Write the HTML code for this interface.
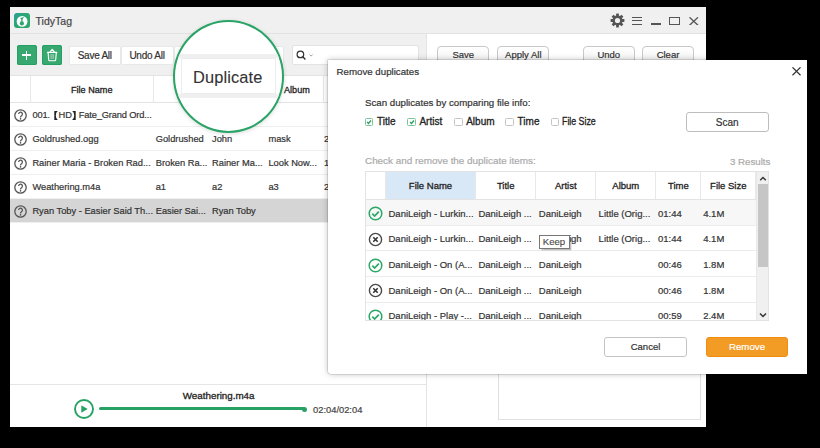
<!DOCTYPE html>
<html><head><meta charset="utf-8">
<style>
*{margin:0;padding:0;box-sizing:border-box}
html,body{width:820px;height:448px;overflow:hidden;background:#000;font-family:"Liberation Sans",sans-serif;color:#333;-webkit-text-stroke-width:0.2px}
.a{position:absolute}
.t{position:absolute;white-space:nowrap;line-height:1}
#win{left:10px;top:7px;width:696px;height:420px;background:#fff;overflow:hidden}
#title{left:0;top:0;width:696px;height:27px;background:#f0f0f0;border-bottom:1px solid #e2e2e2}
#tb{left:0;top:27px;width:416px;height:42px;background:#f0f0f0;border-bottom:1px solid #e3e3e3}
.gbtn{width:20px;height:20px;background:#37a86f;border-radius:2.5px;box-shadow:inset 0 0 0 1px #26a062}
.wbtn{background:#fff;border:1px solid #e8e8e8;border-radius:2px;height:19.5px;font-size:10px;letter-spacing:-0.25px;color:#333;text-align:center;line-height:17px}
.hd{font-size:9.1px;color:#222;-webkit-text-stroke-width:0.3px}
.row{left:0;width:416px;height:24px;border-bottom:1px solid #efefef}
.cell{position:absolute;top:7.5px;font-size:9.3px;color:#333;white-space:nowrap;line-height:1}
.br{font-weight:bold;padding:0 1.5px}
.q{position:absolute;left:4px;top:5.5px;width:13px;height:13px}
#rp{left:416px;top:27px;width:280px;height:393px;border-left:1px solid #e3e3e3;background:#fff}
.rbtn{height:20px;border:1px solid #c9c9c9;border-radius:4px;background:linear-gradient(#fff,#f1f1f1);font-size:9.5px;text-align:center;line-height:16px;color:#333}
#dlg{left:328px;top:60px;width:479px;height:314px;background:#fff;border-radius:0 0 0 3px;box-shadow:0 0 6px rgba(0,0,0,.25),0 0 0 .6px rgba(0,0,0,.18)}
.dt{font-size:9.7px;color:#333}
.cb{position:absolute;width:8.5px;height:8.5px;border:1px solid #c4c4c4;border-radius:1.5px;background:#fff}
.cb.on{border-color:#7cc49b}
.lbl{font-size:10px;color:#222;-webkit-text-stroke-width:0.3px}
.th{position:absolute;top:0;height:27px;border-right:1px solid #e8e8e8;font-size:9.5px;color:#222;text-align:center;line-height:27px;-webkit-text-stroke-width:0.3px}
.dr{position:absolute;left:0;width:391px;height:25.7px;border-bottom:1px solid #ececec}
.ic{position:absolute;left:2.1px;top:6.2px}
.dc{position:absolute;top:8.6px;font-size:9.5px;color:#333;white-space:nowrap;line-height:1}
</style></head><body>
<div id="win" class="a">
  <div id="title" class="a">
    <div class="a" style="left:4.2px;top:5.8px;width:15.6px;height:15.6px;border-radius:3px;background:linear-gradient(135deg,#2aa196,#2ba86a 60%)"></div>
    <div class="t" style="left:25.6px;top:9.3px;font-size:10.5px;color:#444">TidyTag</div>
    <svg class="a" style="left:4.2px;top:5.8px" width="15.6" height="15.6" viewBox="0 0 15.6 15.6"><circle cx="8.1" cy="8.4" r="5.4" fill="#fff"/><circle cx="7.9" cy="10.4" r="2.1" fill="#2aa66e"/><path d="M7.3 5.6h1.2v4.5H7.3z" fill="#2aa66e"/><path d="M6.1 4.9L10.1 4 8 6.9z" fill="#2aa66e"/></svg>
    <svg class="a" style="left:600px;top:6px" width="15" height="15" viewBox="0 0 15 15"><g fill="#555"><circle cx="7.5" cy="7.5" r="5"/><rect x="6.1" y="0.6" width="2.8" height="3" rx=".4" transform="rotate(0 7.5 7.5)"/><rect x="6.1" y="0.6" width="2.8" height="3" rx=".4" transform="rotate(45 7.5 7.5)"/><rect x="6.1" y="0.6" width="2.8" height="3" rx=".4" transform="rotate(90 7.5 7.5)"/><rect x="6.1" y="0.6" width="2.8" height="3" rx=".4" transform="rotate(135 7.5 7.5)"/><rect x="6.1" y="0.6" width="2.8" height="3" rx=".4" transform="rotate(180 7.5 7.5)"/><rect x="6.1" y="0.6" width="2.8" height="3" rx=".4" transform="rotate(225 7.5 7.5)"/><rect x="6.1" y="0.6" width="2.8" height="3" rx=".4" transform="rotate(270 7.5 7.5)"/><rect x="6.1" y="0.6" width="2.8" height="3" rx=".4" transform="rotate(315 7.5 7.5)"/></g><circle cx="7.5" cy="7.5" r="2.6" fill="#f0f0f0"/></svg>
    <div class="a" style="left:622px;top:9.8px;width:10px;height:1.3px;background:#555"></div>
    <div class="a" style="left:622px;top:13.2px;width:10px;height:1.3px;background:#555"></div>
    <div class="a" style="left:622px;top:16.8px;width:10px;height:1.3px;background:#555"></div>
    <div class="a" style="left:641.3px;top:16px;width:10px;height:2px;background:#555"></div>
    <div class="a" style="left:659px;top:10px;width:11px;height:8px;border:1.5px solid #555"></div>
    <svg class="a" style="left:679px;top:9.7px" width="9.5" height="8.5" viewBox="0 0 9.5 8.5"><path d="M.5.3l8.5 8M9 .3L.5 8.3" stroke="#555" stroke-width="1.3"/></svg>
  </div>
  <div id="tb" class="a">
    <div class="a gbtn" style="left:7px;top:11px"><div class="a" style="left:4.6px;top:9.2px;width:9.8px;height:1.8px;background:#fff"></div><div class="a" style="left:8.7px;top:5.8px;width:1.8px;height:9px;background:#fff"></div></div>
    <div class="a gbtn" style="left:32px;top:11px"><svg class="a" style="left:0;top:0" width="20" height="20" viewBox="0 0 20 20"><path d="M7.9 7.2L10.2 4.4l2.3 2.8M5.1 7.3h10.2M6.1 7.4L6.7 14.7Q6.8 15.7 7.7 15.7H12.7Q13.6 15.7 13.7 14.7L14.3 7.4" fill="none" stroke="#fff" stroke-width="1.15" stroke-linejoin="round"/><rect x="8.4" y="9.3" width="3.6" height="4.4" fill="#a9d6bb"/><path d="M10.2 9.3v4.4M8.4 10.8h3.6M8.4 12.3h3.6" stroke="#3aa872" stroke-width=".5"/></svg></div>
    <div class="a wbtn" style="left:58.5px;top:11.7px;width:52.5px">Save All</div>
    <div class="a wbtn" style="left:110.5px;top:11.7px;width:53px">Undo All</div>
    <div class="a wbtn" style="left:163.5px;top:11.7px;width:110px"></div>
    <div class="a" style="left:281.7px;top:11px;width:127px;height:19.5px;background:#fff;border:1px solid #e3e3e3;border-radius:2px"><svg class="a" style="left:3px;top:3.8px" width="20" height="11" viewBox="0 0 20 11"><circle cx="4.4" cy="4.4" r="3.3" fill="none" stroke="#333" stroke-width="1.2"/><path d="M6.8 6.8l2.6 2.6" stroke="#333" stroke-width="1.4"/><path d="M13.5 4.5l1.6 1.6 1.6-1.6" fill="none" stroke="#999" stroke-width=".9"/></svg></div>
  </div>
  <!-- header -->
  <div class="a" style="left:0;top:69px;width:416px;height:27px;border-bottom:1px solid #e3e3e3;background:#fff">
    <div class="a" style="left:20px;top:0;width:1px;height:27px;background:#e8e8e8"></div>
    <div class="a" style="left:143px;top:0;width:1px;height:27px;background:#e8e8e8"></div>
    <div class="a" style="left:312.5px;top:0;width:1px;height:27px;background:#e8e8e8"></div>
    <div class="t hd" style="left:61px;top:9.5px">File Name</div>
    <div class="t hd" style="left:274px;top:9.5px">Album</div>
  </div>
  <div class="a row" style="top:96px"><svg class="q" viewBox="0 0 13 13"><circle cx="6.5" cy="6.5" r="5.7" fill="none" stroke="#555" stroke-width="1.3"/><path d="M4.6 5.1a1.9 1.9 0 1 1 2.9 1.6c-.6.4-.9.7-.9 1.4v.3" fill="none" stroke="#555" stroke-width="1.3"/><circle cx="6.5" cy="9.9" r=".8" fill="#555"/></svg><div class="cell" style="left:22.4px;letter-spacing:-0.15px">001.<span style="display:inline-block;position:relative;width:4px;height:1px;margin:0 0.3px 0 4.4px"><svg style="position:absolute;left:0;top:-6px" width="4" height="9" viewBox="0 0 4 9"><path d="M.3 0H3.8Q1.8 1.2 1.8 4.5T3.8 9H.3z" fill="#222"/></svg></span>HD<span style="display:inline-block;position:relative;width:4px;height:1px;margin:0 2.4px 0 0.6px"><svg style="position:absolute;left:0;top:-6px" width="4" height="9" viewBox="0 0 4 9"><path d="M3.7 0H.2Q2.2 1.2 2.2 4.5T.2 9H3.7z" fill="#222"/></svg></span>Fate_Grand Ord...</div></div>
  <div class="a row" style="top:120px"><svg class="q" viewBox="0 0 13 13"><circle cx="6.5" cy="6.5" r="5.7" fill="none" stroke="#555" stroke-width="1.3"/><path d="M4.6 5.1a1.9 1.9 0 1 1 2.9 1.6c-.6.4-.9.7-.9 1.4v.3" fill="none" stroke="#555" stroke-width="1.3"/><circle cx="6.5" cy="9.9" r=".8" fill="#555"/></svg><div class="cell" style="left:22.4px">Goldrushed.ogg</div><div class="cell" style="left:145.7px">Goldrushed</div><div class="cell" style="left:202px">John</div><div class="cell" style="left:258.4px">mask</div><div class="cell" style="left:314px">2</div></div>
  <div class="a row" style="top:144px"><svg class="q" viewBox="0 0 13 13"><circle cx="6.5" cy="6.5" r="5.7" fill="none" stroke="#555" stroke-width="1.3"/><path d="M4.6 5.1a1.9 1.9 0 1 1 2.9 1.6c-.6.4-.9.7-.9 1.4v.3" fill="none" stroke="#555" stroke-width="1.3"/><circle cx="6.5" cy="9.9" r=".8" fill="#555"/></svg><div class="cell" style="left:22.4px">Rainer Maria - Broken Rad...</div><div class="cell" style="left:145.7px">Broken Ra...</div><div class="cell" style="left:202px">Rainer Ma...</div><div class="cell" style="left:258.4px">Look Now...</div><div class="cell" style="left:314px">1</div></div>
  <div class="a row" style="top:168px"><svg class="q" viewBox="0 0 13 13"><circle cx="6.5" cy="6.5" r="5.7" fill="none" stroke="#555" stroke-width="1.3"/><path d="M4.6 5.1a1.9 1.9 0 1 1 2.9 1.6c-.6.4-.9.7-.9 1.4v.3" fill="none" stroke="#555" stroke-width="1.3"/><circle cx="6.5" cy="9.9" r=".8" fill="#555"/></svg><div class="cell" style="left:22.4px">Weathering.m4a</div><div class="cell" style="left:145.7px">a1</div><div class="cell" style="left:202px">a2</div><div class="cell" style="left:258.4px">a3</div><div class="cell" style="left:314px">2</div></div>
  <div class="a row" style="top:192px;background:#d5d5d5"><svg class="q" viewBox="0 0 13 13"><circle cx="6.5" cy="6.5" r="5.7" fill="none" stroke="#555" stroke-width="1.3"/><path d="M4.6 5.1a1.9 1.9 0 1 1 2.9 1.6c-.6.4-.9.7-.9 1.4v.3" fill="none" stroke="#555" stroke-width="1.3"/><circle cx="6.5" cy="9.9" r=".8" fill="#555"/></svg><div class="cell" style="left:22.4px">Ryan Toby - Easier Said Th...</div><div class="cell" style="left:145.7px">Easier Sai...</div><div class="cell" style="left:202px">Ryan Toby</div></div>
  <!-- player -->
  <div class="a" style="left:0;top:377px;width:416px;height:1px;background:#e6e6e6"></div>
  <div class="t" style="left:172.8px;top:383.8px;font-size:9.8px;color:#222;-webkit-text-stroke-width:0.3px">Weathering.m4a</div>
  <svg class="a" style="left:64px;top:392.4px" width="20" height="20" viewBox="0 0 20 20"><circle cx="10" cy="10" r="9" fill="none" stroke="#27a264" stroke-width="1.9"/><path d="M7.6 6.6Q7.3 6.4 7.3 6.9V13.2Q7.3 13.7 7.7 13.4L13.3 10.3Q13.7 10 13.3 9.7Z" fill="#27a264"/></svg>
  <div class="a" style="left:89.3px;top:400.3px;width:206px;height:3px;border-radius:1.5px;background:#27a264"></div>
  <div class="a" style="left:291.8px;top:399.5px;width:5.2px;height:5.2px;border-radius:50%;background:#27a264"></div>
  <div class="t" style="left:303px;top:398.6px;font-size:9.35px;color:#444">02:04/02:04</div>
  <!-- right panel -->
  <div id="rp" class="a">
    <div class="a rbtn" style="left:10.3px;top:11.8px;width:52px">Save</div>
    <div class="a rbtn" style="left:70.3px;top:11.8px;width:52px">Apply All</div>
    <div class="a rbtn" style="left:155.8px;top:11.8px;width:52px">Undo</div>
    <div class="a rbtn" style="left:215px;top:11.8px;width:52px">Clear</div>
    <div class="a" style="left:71px;top:250px;width:203px;height:136px;border:1px solid #e0e0e0"></div>
  </div>
</div>

<!-- magnifier -->
<div class="a" style="left:173px;top:19.8px;width:111.4px;height:112.8px;border:2.3px solid #29a366;border-radius:50%;background:#fff;overflow:hidden;box-shadow:0 1px 4px rgba(0,0,0,.14)">
  <div class="a" style="left:-2px;top:31.9px;width:115px;height:4.7px;background:#efefef"></div>
  <div class="a" style="left:6px;top:36.6px;width:95px;height:35.2px;border:1px solid #ededed;background:#fff"></div>
  <div class="a" style="left:-2px;top:71.8px;width:115px;height:4.7px;background:#efefef"></div>
  <div class="t" style="left:17.9px;top:47.3px;font-size:16.4px;letter-spacing:0.15px;color:#333;-webkit-text-stroke-width:0.1px">Duplicate</div>
</div>

<!-- dialog -->
<div id="dlg" class="a">
  <div class="t dt" style="left:8.6px;top:6.8px">Remove duplicates</div>
  <svg class="a" style="left:463.5px;top:7px" width="9" height="8.5" viewBox="0 0 9 8.5"><path d="M.5.3l8 7.9M8.5.3l-8 7.9" stroke="#333" stroke-width="1.2"/></svg>
  <div class="t dt" style="left:37px;top:37.7px">Scan duplicates by comparing file info:</div>
  <div class="t dt" style="left:37px;top:95.5px;color:#aaa;font-size:9.9px">Check and remove the duplicate items:</div>
  <div class="t dt" style="left:402px;top:96.5px;color:#aaa">3 Results</div>
  <div class="cb on" style="left:36.5px;top:57.6px"><svg class="a" style="left:0.5px;top:0.8px" width="6" height="6" viewBox="0 0 6 6"><path d="M1.1 3l1.4 1.4L5 1.5" fill="none" stroke="#2a9e60" stroke-width="1.35"/></svg></div><div class="t lbl" style="left:49.1px;top:57px">Title</div>
  <div class="cb on" style="left:79.3px;top:57.6px"><svg class="a" style="left:0.5px;top:0.8px" width="6" height="6" viewBox="0 0 6 6"><path d="M1.1 3l1.4 1.4L5 1.5" fill="none" stroke="#2a9e60" stroke-width="1.35"/></svg></div><div class="t lbl" style="left:91.4px;top:57px">Artist</div>
  <div class="cb" style="left:126px;top:57.6px"></div><div class="t lbl" style="left:138.2px;top:57px">Album</div>
  <div class="cb" style="left:177.4px;top:57.6px"></div><div class="t lbl" style="left:189.6px;top:57px">Time</div>
  <div class="cb" style="left:222.7px;top:57.6px"></div><div class="t lbl" style="left:234.4px;top:57px;transform:scaleX(.88);transform-origin:0 0">File Size</div>
  <div class="a" style="left:358px;top:52px;width:82.5px;height:20px;border:1px solid #bdbdbd;border-radius:3px;text-align:center;font-size:10px;line-height:19px">Scan</div>
  <div class="a" style="left:37px;top:111px;width:404px;height:150px;border:1px solid #e3e3e3;overflow:hidden" id="dtab">
    <div class="th" style="left:0;width:20px"></div><div class="th" style="left:20px;width:90px;background:#d8e8f6">File Name</div><div class="th" style="left:110px;width:60.4px">Title</div><div class="th" style="left:170.4px;width:59.8px">Artist</div><div class="th" style="left:230.2px;width:60.3px">Album</div><div class="th" style="left:290.5px;width:44.8px">Time</div><div class="th" style="left:335.3px;width:55px">File Size</div>
    <div class="a" style="left:0;top:27px;width:391px;height:1px;background:#e3e3e3"></div>
    <div class="dr" style="top:28px;background:#f7f7f7"><svg class="ic" width="15" height="15" viewBox="0 0 15 15"><circle cx="7.5" cy="7.5" r="6.3" fill="none" stroke="#2aa866" stroke-width="1.5"/><path d="M4.3 7.7l2.3 2.3 4.2-4.4" fill="none" stroke="#2aa866" stroke-width="1.7"/></svg><div class="dc" style="left:22.5px">DaniLeigh - Lurkin...</div><div class="dc" style="left:112.4px">DaniLeigh ...</div><div class="dc" style="left:172.8px">DaniLeigh</div><div class="dc" style="left:232.6px">Little (Orig...</div><div class="dc" style="left:292px">01:44</div><div class="dc" style="left:337.2px">4.1M</div></div>
    <div class="dr" style="top:53.7px"><svg class="ic" width="15" height="15" viewBox="0 0 15 15"><circle cx="7.5" cy="7.5" r="6.1" fill="none" stroke="#4a4a4a" stroke-width="1.4"/><path d="M5.3 5.3l4.4 4.4M9.7 5.3l-4.4 4.4" fill="none" stroke="#333" stroke-width="1.6"/></svg><div class="dc" style="left:22.5px">DaniLeigh - Lurkin...</div><div class="dc" style="left:112.4px">DaniLeigh ...</div><div class="dc" style="left:172.8px">DaniLeigh</div><div class="dc" style="left:232.6px">Little (Orig...</div><div class="dc" style="left:292px">01:44</div><div class="dc" style="left:337.2px">4.1M</div></div>
    <div class="dr" style="top:79.4px"><svg class="ic" width="15" height="15" viewBox="0 0 15 15"><circle cx="7.5" cy="7.5" r="6.3" fill="none" stroke="#2aa866" stroke-width="1.5"/><path d="M4.3 7.7l2.3 2.3 4.2-4.4" fill="none" stroke="#2aa866" stroke-width="1.7"/></svg><div class="dc" style="left:22.5px">DaniLeigh - On (A...</div><div class="dc" style="left:112.4px">DaniLeigh ...</div><div class="dc" style="left:172.8px">DaniLeigh</div><div class="dc" style="left:292px">00:46</div><div class="dc" style="left:337.2px">1.8M</div></div>
    <div class="dr" style="top:105.1px"><svg class="ic" width="15" height="15" viewBox="0 0 15 15"><circle cx="7.5" cy="7.5" r="6.1" fill="none" stroke="#4a4a4a" stroke-width="1.4"/><path d="M5.3 5.3l4.4 4.4M9.7 5.3l-4.4 4.4" fill="none" stroke="#333" stroke-width="1.6"/></svg><div class="dc" style="left:22.5px">DaniLeigh - On (A...</div><div class="dc" style="left:112.4px">DaniLeigh ...</div><div class="dc" style="left:172.8px">DaniLeigh</div><div class="dc" style="left:292px">00:46</div><div class="dc" style="left:337.2px">1.8M</div></div>
    <div class="dr" style="top:130.8px"><svg class="ic" width="15" height="15" viewBox="0 0 15 15"><circle cx="7.5" cy="7.5" r="6.3" fill="none" stroke="#2aa866" stroke-width="1.5"/><path d="M4.3 7.7l2.3 2.3 4.2-4.4" fill="none" stroke="#2aa866" stroke-width="1.7"/></svg><div class="dc" style="left:22.5px">DaniLeigh - Play -...</div><div class="dc" style="left:112.4px">DaniLeigh ...</div><div class="dc" style="left:172.8px">DaniLeigh</div><div class="dc" style="left:292px">00:59</div><div class="dc" style="left:337.2px">2.4M</div></div>
    <div class="a" style="left:390px;top:0;width:12px;height:150px;background:#f0f0f0;border-left:1px solid #e8e8e8">
      <svg class="a" style="left:1.6px;top:3.6px" width="8" height="6" viewBox="0 0 8 6"><path d="M1.2 4.2L4 1.5l2.8 2.7" fill="none" stroke="#333" stroke-width="1.4"/></svg>
      <div class="a" style="left:0.5px;top:12px;width:10px;height:83px;background:#c6c6c6"></div>
      <svg class="a" style="left:2px;top:140px" width="8" height="6" viewBox="0 0 8 6"><path d="M1 1.5L4 4.5l3-3" fill="none" stroke="#333" stroke-width="1.5"/></svg>
    </div>
    <div class="a" style="left:173px;top:62.9px;width:31px;height:14px;border:1px solid #777;background:#fff;box-shadow:1.5px 1.5px 1.5px rgba(0,0,0,.25);font-size:9.6px;color:#444;line-height:12.5px;padding-left:2.8px;-webkit-text-stroke-width:0.1px">Keep</div>
  </div>
  <div class="a" style="left:276px;top:276.5px;width:83px;height:20px;border:1px solid #c4c4c4;border-radius:3px;text-align:center;font-size:9.5px;line-height:18px">Cancel</div>
  <div class="a" style="left:378px;top:276.5px;width:82px;height:20px;background:#f39c25;border:1px solid #f08c10;border-radius:3px;text-align:center;font-size:9.7px;line-height:18px;color:#fff">Remove</div>
</div>
</body></html>
